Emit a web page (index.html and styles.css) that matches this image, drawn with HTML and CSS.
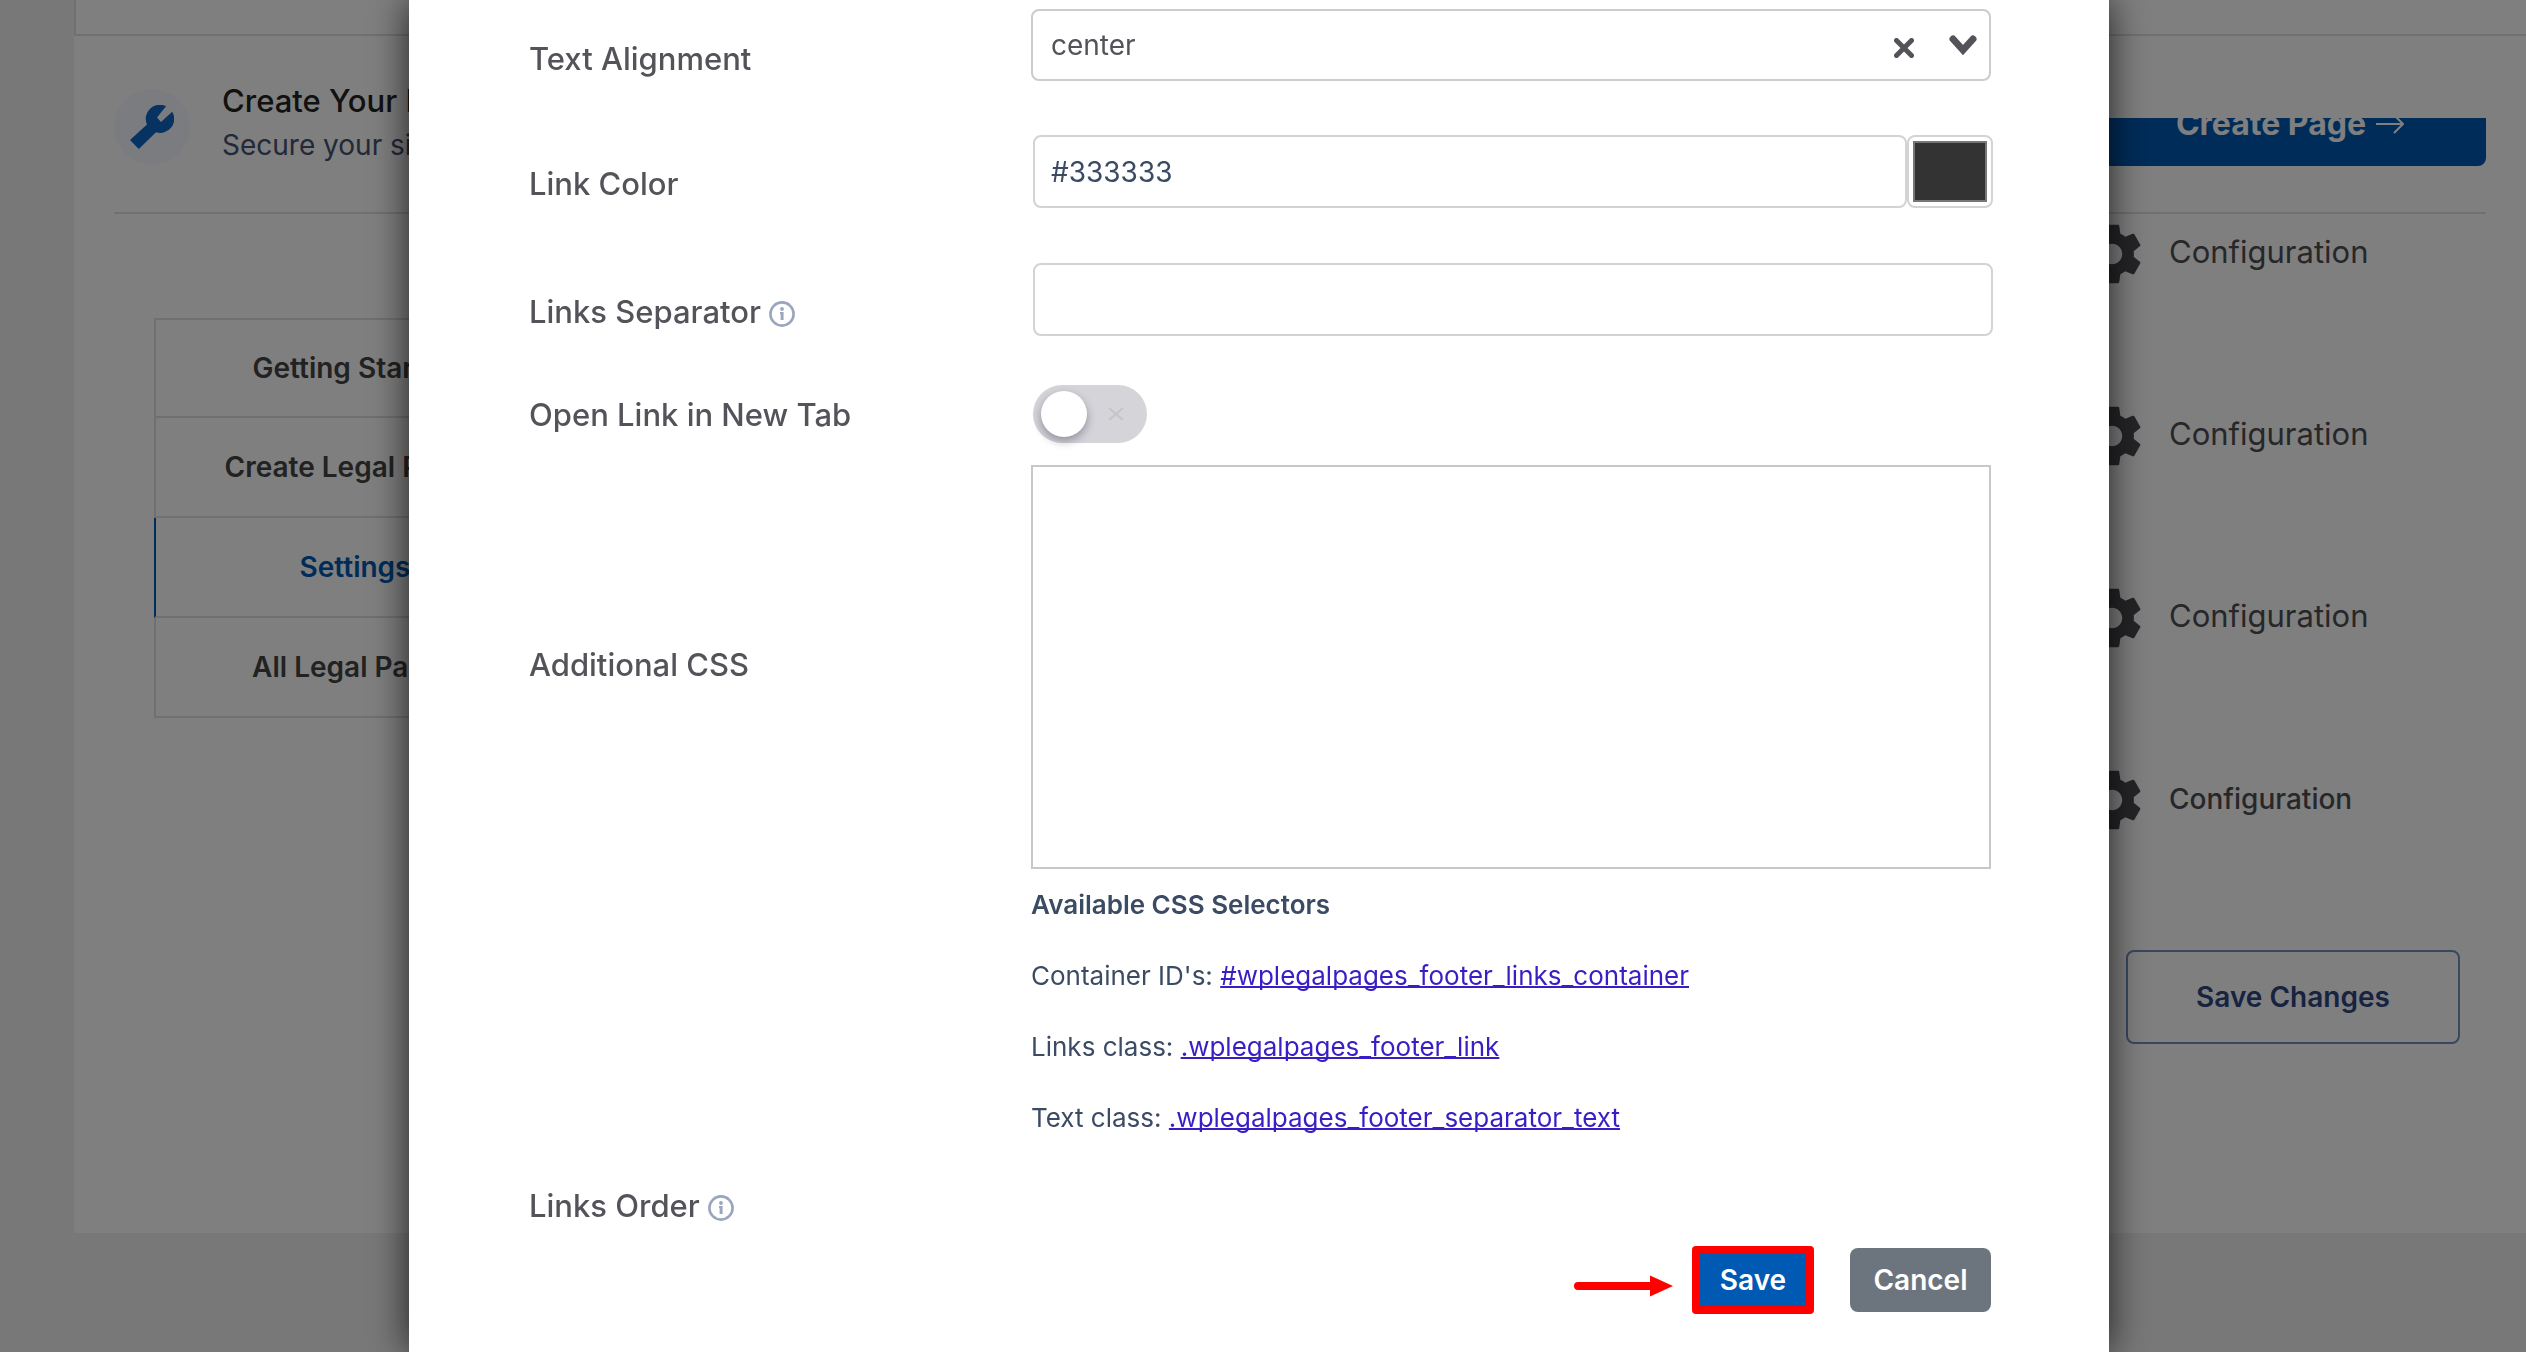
FILE: index.html
```html
<!DOCTYPE html>
<html lang="en">
<head>
<meta charset="utf-8">
<title>Legal Pages Settings</title>
<link rel="stylesheet" href="styles.css">
</head>
<body>
<svg class="sprite" aria-hidden="true">
  <symbol id="gear" viewBox="0 0 24 24"><path d="M19.43 12.98c.04-.32.07-.64.07-.98s-.03-.66-.07-.98l2.11-1.65c.19-.15.24-.42.12-.64l-2-3.46c-.12-.22-.39-.3-.61-.22l-2.49 1c-.52-.4-1.08-.73-1.69-.98l-.38-2.65C14.46 2.18 14.25 2 14 2h-4c-.25 0-.46.18-.49.42l-.38 2.65c-.61.25-1.17.59-1.69.98l-2.49-1c-.23-.09-.49 0-.61.22l-2 3.46c-.13.22-.07.49.12.64l2.11 1.65c-.04.32-.07.65-.07.98s.03.66.07.98l-2.11 1.65c-.19.15-.24.42-.12.64l2 3.46c.12.22.39.3.61.22l2.49-1c.52.4 1.08.73 1.69.98l.38 2.65c.03.24.24.42.49.42h4c.25 0 .46-.18.49-.42l.38-2.65c.61-.25 1.17-.59 1.69-.98l2.49 1c.23.09.49 0 .61-.22l2-3.46c.12-.22.07-.49-.12-.64l-2.11-1.65zM12 15.5c-1.93 0-3.5-1.57-3.5-3.5s1.57-3.5 3.5-3.5 3.5 1.57 3.5 3.5-1.57 3.5-3.5 3.5z"/></symbol>
  <symbol id="info" viewBox="0 0 26 26"><circle cx="13" cy="13" r="11.6" fill="none" stroke="currentColor" stroke-width="2.6"/><circle cx="13" cy="8" r="1.9"/><path d="M11 11h3.600v8h-3v-6H11z"/></symbol>
</svg>

<main class="page">
  <div class="top-box"></div>
  <header class="intro">
    <span class="intro-icon">
      <svg viewBox="0 0 44 44" aria-hidden="true"><path d="M0 35 17 19.500A14 14 0 0 1 36 1.200L27 12.600 31 17 42.200 6.700A14 14 0 0 1 26 27.300L8.800 44z"/></svg>
    </span>
    <div class="intro-text">
      <h1>Create Your Legal Pages</h1>
      <p>Secure your site</p>
    </div>
    <div class="intro-action">
      <button type="button" class="create">Create Page
        <svg viewBox="0 0 28 20" aria-hidden="true"><path d="M0 10h27M18 1l9 9-9 9"/></svg>
      </button>
    </div>
  </header>

  <div class="content">
    <nav class="tabs">
      <a href="#start">Getting Started</a>
      <a href="#create">Create Legal Pages</a>
      <a href="#settings" class="active">Settings</a>
      <a href="#all">All Legal Pages</a>
    </nav>
    <section class="configs">
      <a href="#c1" class="config"><svg aria-hidden="true"><use href="#gear"/></svg><span>Configuration</span></a>
      <a href="#c2" class="config"><svg aria-hidden="true"><use href="#gear"/></svg><span>Configuration</span></a>
      <a href="#c3" class="config"><svg aria-hidden="true"><use href="#gear"/></svg><span>Configuration</span></a>
      <a href="#c4" class="config small"><svg aria-hidden="true"><use href="#gear"/></svg><span>Configuration</span></a>
      <button type="button" class="save-changes">Save Changes</button>
    </section>
  </div>
</main>

<div class="overlay">
  <form class="modal" role="dialog" aria-label="Footer links">
    <div class="row boxed select-row">
      <label for="align">Text Alignment</label>
      <div class="select">
        <select id="align"><option>center</option></select>
        <div class="select-icons">
          <button type="button" aria-label="Clear selection"><svg viewBox="0 0 20 20" width="20" height="20"><path d="M2.500 2.500l15 15M17.500 2.500l-15 15"/></svg></button>
          <svg viewBox="0 0 28 20" width="28" height="20" aria-hidden="true"><path d="M4 4l10 11L24 4"/></svg>
        </div>
      </div>
    </div>
    <div class="row boxed">
      <label for="color">Link Color</label>
      <div class="inputs">
        <input id="color" type="text" value="#333333">
        <input type="color" value="#333333" aria-label="Pick link color">
      </div>
    </div>
    <div class="row boxed">
      <label for="separator">Links Separator <svg class="info" aria-hidden="true"><use href="#info"/></svg></label>
      <div class="inputs"><input id="separator" type="text"></div>
    </div>
    <div class="row toggle-row">
      <label for="newtab">Open Link in New Tab</label>
      <div class="toggle">
        <input id="newtab" type="checkbox">
        <svg viewBox="0 0 16 14" aria-hidden="true"><path d="M1 1l14 12M15 1L1 13"/></svg>
      </div>
    </div>
    <div class="row css-row">
      <label for="css">Additional CSS</label>
      <textarea id="css"></textarea>
    </div>
    <div class="row help-row">
      <div class="help">
        <p><strong>Available CSS Selectors</strong></p>
        <p>Container ID's: <a href="#container">#wplegalpages_footer_links_container</a></p>
        <p>Links class: <a href="#link">.wplegalpages_footer_link</a></p>
        <p>Text class: <a href="#text">.wplegalpages_footer_separator_text</a></p>
      </div>
    </div>
    <div class="row order-row">
      <span class="label">Links Order <svg class="info" aria-hidden="true"><use href="#info"/></svg></span>
    </div>
    <div class="actions">
      <svg class="arrow" viewBox="0 0 99 34" aria-hidden="true"><path d="M4 23h74" stroke="#f00" stroke-width="8" stroke-linecap="round"/><path d="M76 12.500 99 23 76 33.500z" fill="#f00"/></svg>
      <button type="button" class="save">Save</button>
      <button type="button" class="cancel">Cancel</button>
    </div>
  </form>
</div>
</body>
</html>
```
FILE: styles.css
```css
* { box-sizing: border-box; }

body {
  margin: 0;
  background: #f0f0f1;
  color: #3c4b64;
  font-family: Inter, "Liberation Sans", sans-serif;
  font-size: 28px;
  line-height: 36px;
}

button, input, select, textarea { font: inherit; }
h1, p { margin: 0; }
svg { flex: none; }
.sprite { display: none; }

/* Page behind the dialog */
.page {
  margin-left: 74px;
  background: #fff;
}

.top-box {
  height: 36px;
  border: solid #e0e0e3;
  border-width: 0 0 2px 2px;
}

.intro {
  display: flex;
  align-items: flex-start;
  height: 178px;
  margin: 0 40px;
  padding-top: 47px;
  border-bottom: 2px solid #e0e0e3;
}

.intro-icon {
  display: flex;
  align-items: center;
  justify-content: center;
  width: 76px;
  height: 76px;
  margin: 6px 32px 0 0;
  border-radius: 50%;
  background: #f5f8ff;
}

.intro-icon svg {
  width: 44px;
  height: 44px;
  fill: #0c66c4;
}

.intro h1 {
  margin-bottom: 8px;
  color: #222;
  font-size: 31px;
  font-weight: 500;
  line-height: 36px;
}

.intro p { color: #475270; }

.intro-action {
  display: flex;
  align-items: flex-end;
  height: 48px;
  margin: 35px 0 0 auto;
  overflow: hidden;
}

.create {
  flex: none;
  display: flex;
  align-items: center;
  gap: 10px;
  height: 84px;
  padding: 0 82px;
  border: 0;
  border-radius: 8px;
  background: #0059b3;
  color: #fff;
  font-size: 32px;
  font-weight: 700;
}

.create svg {
  width: 28px;
  height: 20px;
  fill: none;
  stroke: #fff;
  stroke-width: 2;
}

.content {
  display: flex;
  align-items: flex-start;
  justify-content: space-between;
  min-height: 1019px;
}

.tabs {
  display: flex;
  flex-direction: column;
  width: 402px;
  margin: 104px 0 0 80px;
}

.tabs a {
  display: flex;
  align-items: center;
  justify-content: center;
  height: 100px;
  border: solid #e0e0e3;
  border-width: 0 2px 2px;
  color: #444;
  font-weight: 600;
  text-decoration: none;
}

.tabs a:first-child { border-top-width: 2px; }

.tabs .active {
  border-left-color: #0059b3;
  color: #0059b3;
}

.configs {
  display: flex;
  flex-direction: column;
  gap: 112px;
  width: 449px;
  padding-top: 5px;
}

.config {
  display: flex;
  align-items: center;
  gap: 22px;
  color: #4f4f54;
  font-size: 31px;
  text-decoration: none;
}

.config svg {
  width: 70px;
  height: 70px;
  fill: #4a4a50;
}

.config span { padding-bottom: 4px; }

.config.small {
  font-size: 28px;
  font-weight: 500;
}

.small span { padding-bottom: 2px; }

.save-changes {
  width: 334px;
  height: 94px;
  margin: 3px 0 0 49px;
  border: 2px solid #7090c0;
  border-radius: 8px;
  background: #fff;
  color: #2e4680;
  font-weight: 600;
}

/* Dialog */
.overlay {
  position: fixed;
  inset: 0;
  display: flex;
  justify-content: center;
  padding-right: 8px;
  overflow: hidden;
  background: rgba(0, 0, 0, 0.5);
}

.modal {
  width: 1700px;
  min-height: 100%;
  padding: 9px 118px 0 120px;
  background: #fff;
  box-shadow: 0 0 36px rgba(0, 0, 0, 0.75);
}

.row {
  display: grid;
  grid-template-columns: 502px 1fr;
  align-items: center;
}

.row label, .label {
  display: flex;
  align-items: center;
  gap: 8px;
  color: #53535a;
  font-size: 31px;
  font-weight: 500;
}

.boxed { margin-bottom: 55px; }
.boxed label { padding-top: 24px; }
.select-row { margin-bottom: 54px; }
.select-row label { padding-top: 28px; }

.info {
  width: 26px;
  height: 26px;
  margin-top: 4px;
  color: #9aa6bd;
  fill: #9aa6bd;
}

.select { position: relative; }

.select select {
  display: block;
  width: 100%;
  height: 72px;
  padding: 0 18px;
  border: 2px solid #ccc;
  border-radius: 8px;
  appearance: none;
  background: #fff;
  color: #53535a;
}

.select-icons {
  position: absolute;
  top: 26px;
  right: 14px;
  display: flex;
  gap: 35px;
}

.select-icons button {
  height: 20px;
  margin-top: 3px;
  padding: 0;
  border: 0;
  background: none;
  line-height: 0;
}

.select-icons path {
  fill: none;
  stroke: #53535a;
  stroke-width: 5;
  stroke-linecap: round;
}

.select-icons > svg path { stroke-width: 7; }

.inputs {
  display: flex;
  margin: 0 -2px 0 2px;
}

.inputs input {
  height: 73px;
  border: 2px solid #d3d3d3;
  border-radius: 8px;
  background: #fff;
  color: #3c4b64;
}

.inputs [type="text"] {
  flex: 1;
  min-width: 0;
  padding: 0 16px;
}

.inputs [type="color"] {
  width: 86px;
  padding: 4px;
}

.inputs ::-webkit-color-swatch-wrapper { padding: 0; }

.inputs ::-webkit-color-swatch {
  border: 2px solid #777;
  border-radius: 0;
}

.toggle-row { margin: -6px 0 22px; }
.toggle-row label { padding-top: 2px; }

.toggle {
  display: grid;
  align-items: center;
  width: 114px;
  margin-left: 2px;
}

.toggle > * { grid-area: 1 / 1; }

.toggle input {
  width: 114px;
  height: 58px;
  margin: 0;
  padding: 6px 8px;
  border-radius: 29px;
  appearance: none;
  background: #d4d4d9;
}

.toggle input::before {
  content: "";
  display: block;
  width: 46px;
  height: 46px;
  border-radius: 50%;
  background: #fff;
  box-shadow: 0 4px 10px rgba(20, 20, 50, 0.35);
}

.toggle svg {
  width: 16px;
  height: 14px;
  margin-left: 75px;
  fill: none;
  stroke: #c4c4c9;
  stroke-width: 2;
}

.css-row { margin-bottom: 18px; }
.css-row label { padding-bottom: 4px; }

.css-row textarea {
  display: block;
  width: 100%;
  height: 404px;
  border: 2px solid #c8c8c8;
  resize: none;
}

.help {
  grid-column: 2;
  display: grid;
  gap: 35px;
  font-size: 26px;
}

.help strong { font-weight: 600; }
.help a { color: #3a1ec4; text-decoration-thickness: 2px; text-decoration-skip-ink: none; }

.order-row { margin: 52px 0 22px; }

.actions {
  display: flex;
  align-items: center;
  justify-content: flex-end;
}

.actions button {
  color: #fff;
  font-weight: 600;
}

.arrow {
  width: 99px;
  height: 34px;
  margin-right: 19px;
}

.actions .save {
  width: 122px;
  height: 68px;
  margin-right: 36px;
  padding: 0;
  border: 8px solid #f00;
  border-radius: 4px;
  background: #0059b3;
}

.cancel {
  width: 141px;
  height: 64px;
  padding: 0;
  border: 0;
  border-radius: 8px;
  background: #6c757d;
}
```
